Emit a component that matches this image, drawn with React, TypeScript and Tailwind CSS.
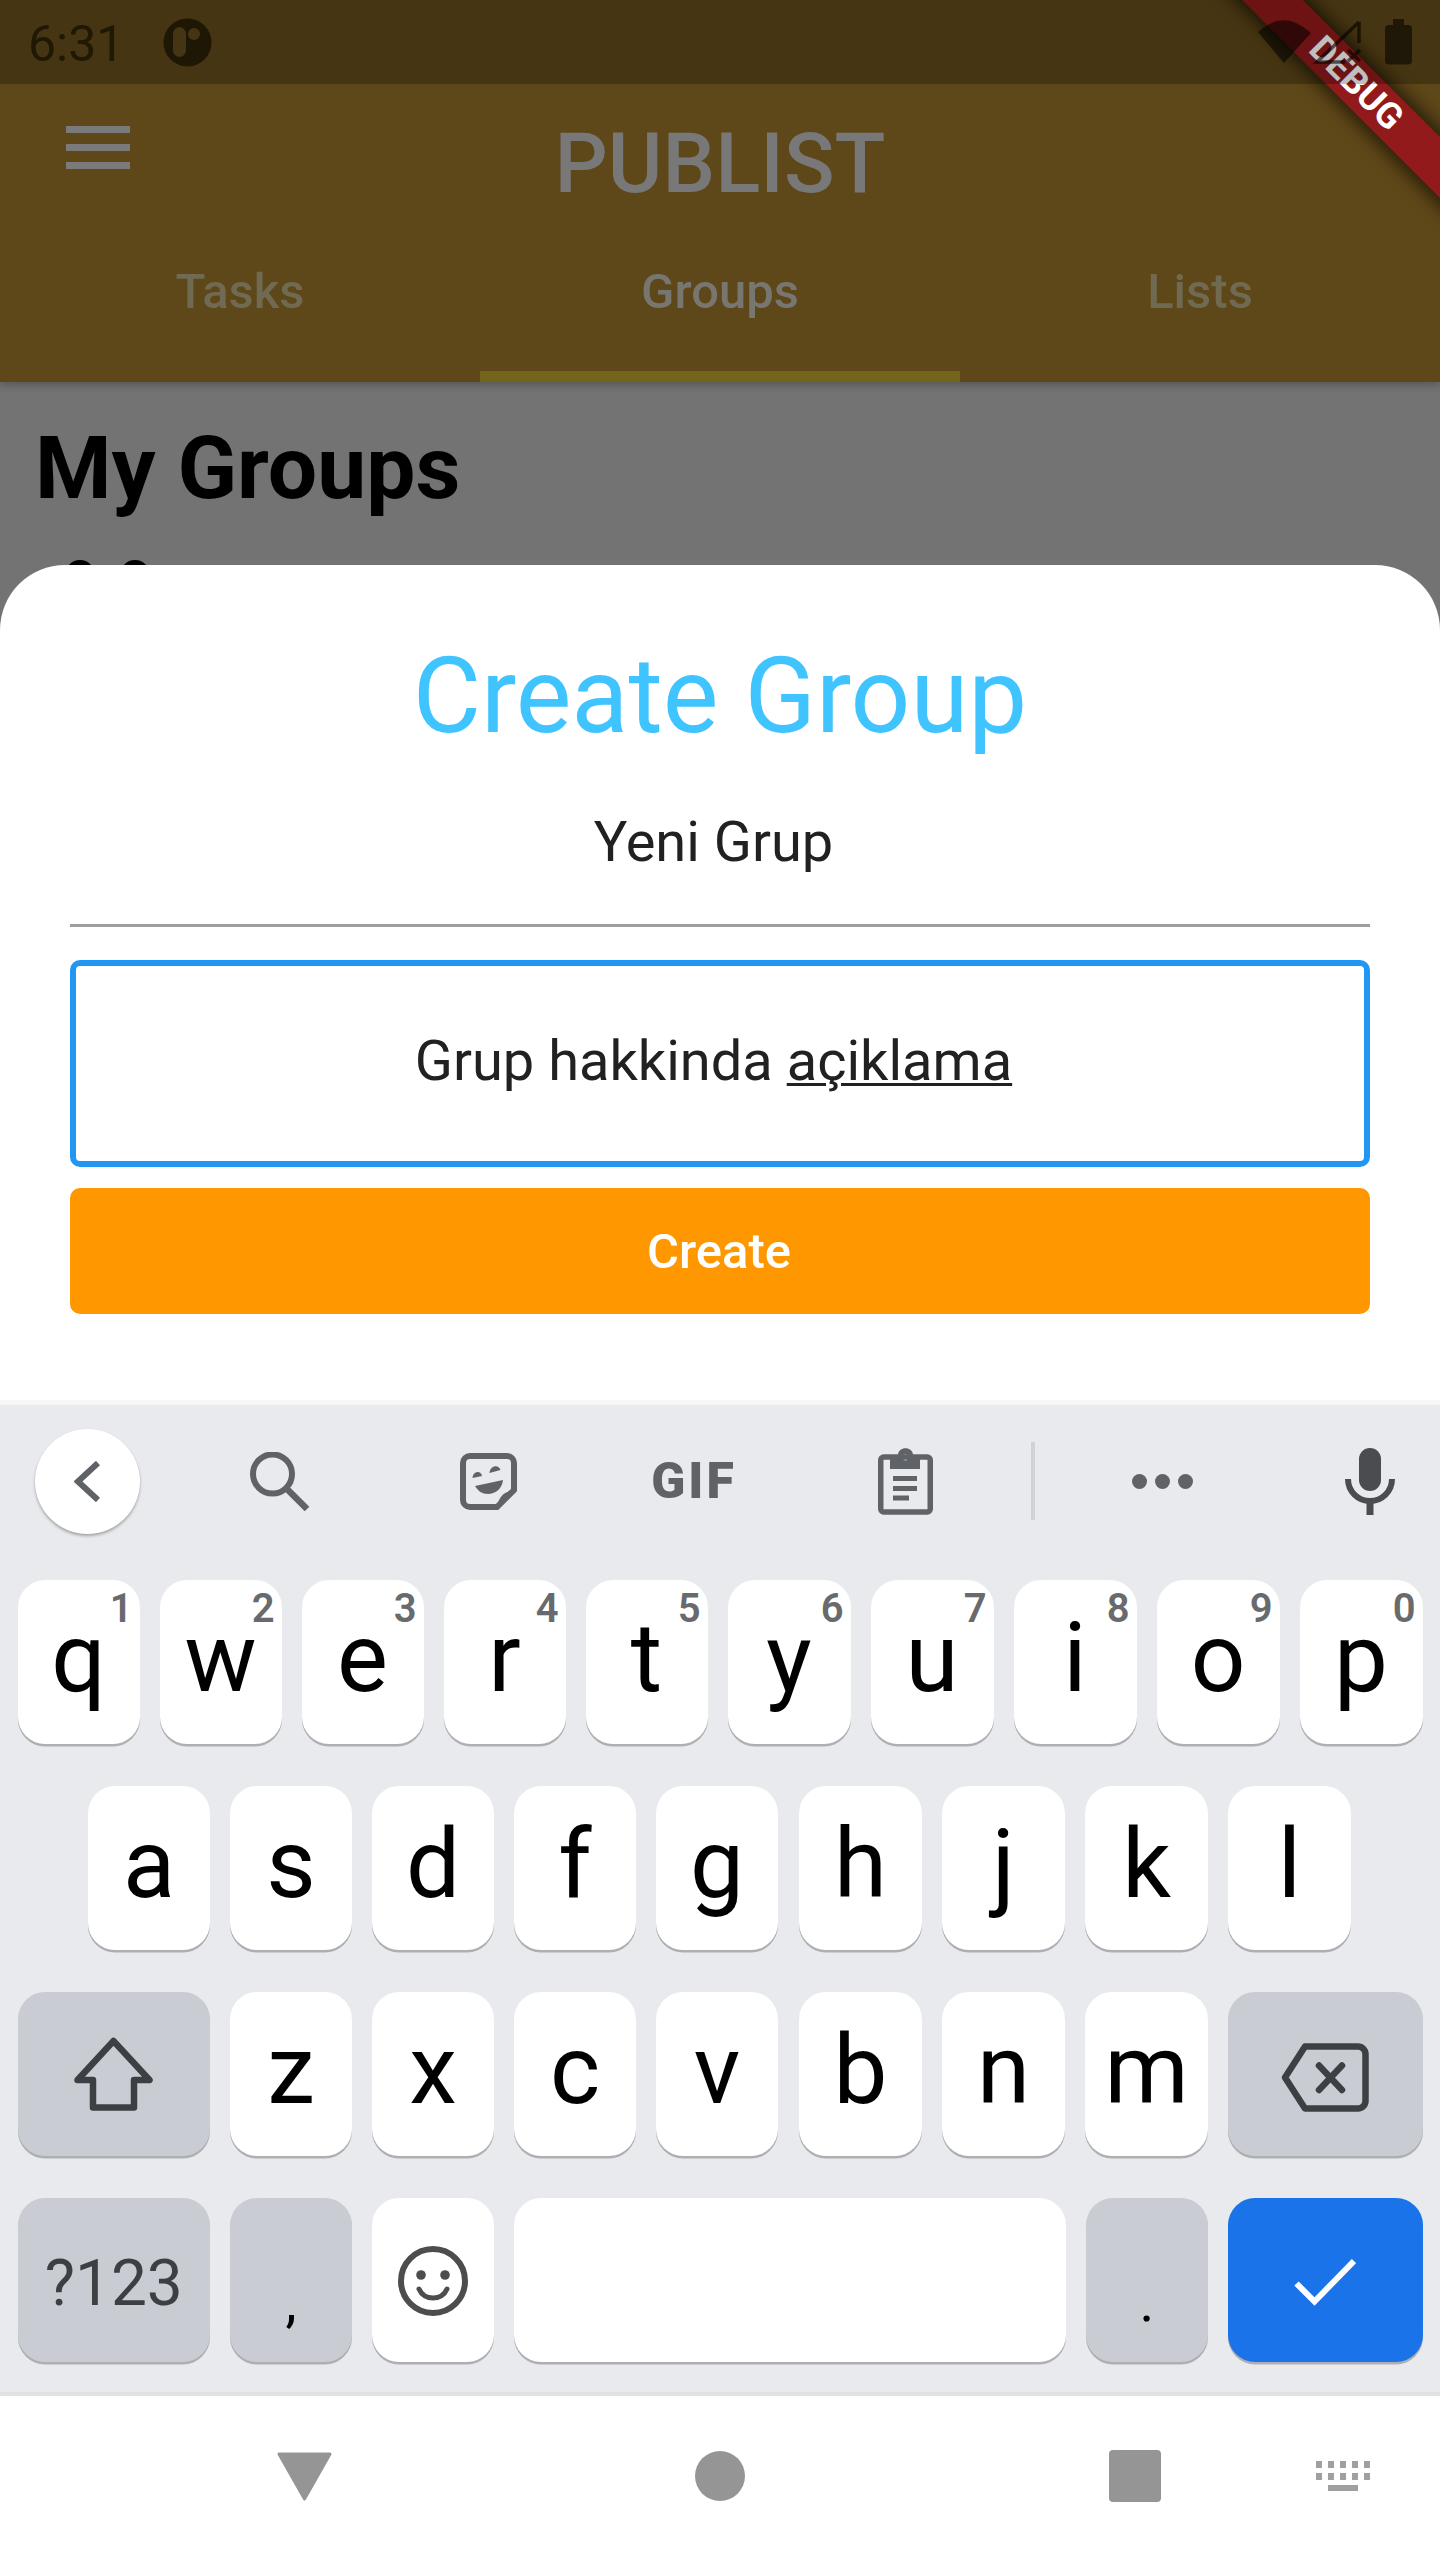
import React from 'react';

const row1 = [['q', '1'], ['w', '2'], ['e', '3'], ['r', '4'], ['t', '5'], ['y', '6'], ['u', '7'], ['i', '8'], ['o', '9'], ['p', '0']];
const row2 = ['a', 's', 'd', 'f', 'g', 'h', 'j', 'k', 'l'];
const row3 = ['z', 'x', 'c', 'v', 'b', 'n', 'm'];

const keyBase = 'relative h-[164px] rounded-[27px] shadow-[0_2.5px_0_#aeafb2] flex justify-center';

const LetterKey = ({ label, hint, wide, nudge }: { label: string; hint?: string; wide?: boolean; nudge?: boolean }) => (
  <div className={`${keyBase} items-start bg-white ${wide ? 'w-[123px]' : 'w-[122px]'} ${nudge ? 'ml-[1px]' : ''}`}>
    <span className="text-[96px] leading-[156px] text-black">{label}</span>
    {hint && <span className="absolute right-[7px] top-[7px] text-[40px] leading-[44px] font-semibold text-[#696a6d]">{hint}</span>}
  </div>
);

const SearchIcon = () => (
  <svg width="60" height="59" viewBox="0 0 60 59" fill="none" stroke="#5f6368">
    <circle cx="22.5" cy="22" r="19.5" strokeWidth="6" />
    <path d="M36 36 L57 57" strokeWidth="6.5" />
  </svg>
);

const StickerIcon = () => (
  <svg width="57" height="57" viewBox="0 0 57 57" fill="none">
    <path d="M10 3 H47 a7 7 0 0 1 7 7 V37 L37 54 H10 a7 7 0 0 1 -7 -7 V10 a7 7 0 0 1 7 -7 Z" stroke="#5f6368" strokeWidth="6" />
    <path d="M38 55 C37 45 44 38 56 37 Z" fill="#5f6368" />
    <path d="M12.5 25 C13 18 21 17 22 23 Z" fill="#5f6368" />
    <path d="M29.5 20 C30 12 39 11 40.5 17 Z" fill="#5f6368" />
    <path d="M15 33 L43 27 C42 36 35 41 28 41 C22 41 18 38 15 33 Z" fill="#5f6368" />
  </svg>
);

const ClipboardIcon = () => (
  <svg width="55" height="67" viewBox="0 0 55 67" fill="none">
    <rect x="2.75" y="9" width="49.5" height="55" rx="3" stroke="#5f6368" strokeWidth="5.5" />
    <path d="M12 7 H20 C20 -2 35 -2 35 7 H42 V21 H12 Z M27.5 6 a3.2 3.2 0 1 0 0.01 0 Z" fill="#5f6368" fillRule="evenodd" />
    <path d="M15 28 H39 V33 H15 Z M15 38 H39 V43 H15 Z M15 47.5 H31 V52.5 H15 Z" fill="#5f6368" />
  </svg>
);

const MicIcon = () => (
  <svg width="50" height="67" viewBox="0 0 50 67" fill="none">
    <rect x="14" y="0" width="22" height="43" rx="11" fill="#4a4c4f" />
    <path d="M3 31 a22 22 0 0 0 44 0" stroke="#4a4c4f" strokeWidth="6" />
    <rect x="21.5" y="52" width="7" height="15" fill="#4a4c4f" />
  </svg>
);

const ShiftIcon = () => (
  <svg width="79" height="75" viewBox="0 0 79 75" fill="none">
    <path d="M39.5 5 L75.5 44 H60 V71.5 H19 V44 H3.5 Z" stroke="#3c4043" strokeWidth="6.5" strokeLinejoin="round" />
  </svg>
);

const BackspaceIcon = () => (
  <svg width="88" height="69" viewBox="0 0 88 69" fill="none" stroke="#3c4043" strokeWidth="6.5">
    <path d="M24 3.5 H77 a7.5 7.5 0 0 1 7.5 7.5 V58 a7.5 7.5 0 0 1 -7.5 7.5 H24 L4 34.5 Z" strokeLinejoin="round" />
    <path d="M38 22.5 L61 47 M61 22.5 L38 47" strokeLinecap="round" />
  </svg>
);

const SmileIcon = () => (
  <svg width="70" height="70" viewBox="0 0 70 70" fill="none" stroke="#4d4d4d">
    <circle cx="35" cy="35" r="32" strokeWidth="6" />
    <circle cx="23" cy="29" r="4.8" fill="#4d4d4d" stroke="none" />
    <circle cx="47" cy="29" r="4.8" fill="#4d4d4d" stroke="none" />
    <path d="M21 43 C26 55 44 55 49 43" strokeWidth="5" strokeLinecap="round" />
  </svg>
);

const StatusBar = () => (
  <div className="absolute left-0 top-0 z-20 h-[84px] w-full bg-black/25">
    <span className="absolute left-[28px] top-[16px] text-[50px] leading-[56px] text-[#1e1805]">6:31</span>
    <svg className="absolute left-[163px] top-[18px]" width="49" height="49" viewBox="0 0 49 49">
      <circle cx="24.5" cy="24.5" r="24" fill="#1f1705" />
      <rect x="10" y="9" width="13" height="30" rx="6.5" fill="#463512" />
      <circle cx="31" cy="16" r="6" fill="#463512" />
    </svg>
    <svg className="absolute right-0 top-0" width="190" height="70" viewBox="1250 0 190 70">
      <path d="M1258 32 Q1284 8 1311 33 L1284 63 Z" fill="#000" fillOpacity="0.55" />
      <path d="M1359 22 V43 M1359 22 L1317 62 H1345" fill="none" stroke="#000" strokeOpacity="0.6" strokeWidth="3.5" />
      <path d="M1348 50 L1360 61 M1360 50 L1348 61" stroke="#000" strokeOpacity="0.6" strokeWidth="3.5" />
      <path d="M1393 25 V19 H1404 V25 H1408 a4 4 0 0 1 4 4 V60.5 a4 4 0 0 1 -4 4 H1389 a4 4 0 0 1 -4 -4 V29 a4 4 0 0 1 4 -4 Z" fill="#000" fillOpacity="0.55" />
    </svg>
  </div>
);

export default function App() {
  return (
    <div className="relative flex h-[2560px] w-[1440px] flex-col overflow-hidden bg-[#737373] font-['Roboto',sans-serif]">
      <StatusBar />

      {/* debug ribbon */}
      <div className="absolute left-[1106px] top-[62px] z-10 flex h-[43px] w-[500px] rotate-45 items-center justify-center bg-[#921a1a] shadow-[0_0_16px_6px_rgba(0,0,0,0.55)]">
        <span className="text-[36px] font-bold leading-[43px] text-white">DEBUG</span>
      </div>

      <header className="relative z-[1] h-[382px] shrink-0 bg-[#5e4718] pt-[84px] shadow-[0_3px_8px_rgba(0,0,0,0.25)]">
        <div className="grid h-[181px] grid-cols-[1fr_auto_1fr]">
          <div className="pl-[66px] pt-[42px]">
            <div className="flex w-[64px] flex-col gap-[11px]">
              <div className="h-[7px] bg-[#7a7a7a]" />
              <div className="h-[7px] bg-[#7a7a7a]" />
              <div className="h-[7px] bg-[#7a7a7a]" />
            </div>
          </div>
          <h1 className="pt-[32px] text-[83.5px] font-medium leading-[96px] text-[#787878]">PUBLIST</h1>
          <div />
        </div>
        <div className="grid grid-cols-3 text-center text-[49px] font-medium leading-[54px]">
          <div className="h-[117px] text-[#706a52]">Tasks</div>
          <div className="h-[117px] border-b-[11px] border-[#736519] text-[#787670]">Groups</div>
          <div className="h-[117px] text-[#706a52]">Lists</div>
        </div>
      </header>

      <main className="h-[183px] shrink-0 overflow-hidden pl-[35px] pt-[37px]">
        <h2 className="text-[87.5px] font-bold leading-[98px] text-black">My Groups</h2>
        <div className="ml-[30px] mt-[43px] flex gap-[25px]">
          <div className="h-[30px] w-[30px] rounded-full bg-black" />
          <div className="h-[30px] w-[30px] rounded-full bg-black" />
        </div>
      </main>

      <section className="h-[840px] shrink-0 rounded-t-[65px] bg-white px-[70px] pt-[73px]">
        <h3 className="text-center text-[105px] leading-[118px] text-[#40c4ff]">Create Group</h3>
        <div className="mt-[54px] h-[117px] border-b-[3px] border-[#9e9e9e] pr-[13px] text-center text-[56px] leading-[64px] text-[#212121]">Yeni Grup</div>
        <div className="mt-[33px] flex h-[207px] items-center justify-center rounded-[10px] border-[6px] border-[#2196f3] pb-[5px] pr-[13px] text-[56px] leading-[64px] text-[#212121]">
          <span>Grup hakkinda <span className="underline decoration-[3px] underline-offset-[3px]">açiklama</span></span>
        </div>
        <button className="mt-[21px] flex h-[126px] w-full items-center justify-center rounded-[10px] bg-[#ff9800] pr-[2px] pt-[2px] text-[49px] font-medium leading-[54px] text-white">Create</button>
      </section>

      <section className="z-[1] h-[987px] shrink-0 bg-[#e8eaed] shadow-[0_-5px_0_#f6f6f6]">
        <div className="flex h-[175px] items-center pb-[23px]">
          <div className="flex w-[174px] justify-center">
            <div className="flex h-[105px] w-[105px] items-center justify-center rounded-full bg-white shadow-[0_2px_3px_rgba(0,0,0,0.3)]">
              <svg width="26" height="41" viewBox="0 0 26 41" fill="none"><path d="M24 2 L4 20.5 L24 39" stroke="#5f6368" strokeWidth="6" /></svg>
            </div>
          </div>
          <div className="flex w-[212px] justify-center"><SearchIcon /></div>
          <div className="flex w-[204px] justify-center"><StickerIcon /></div>
          <div className="flex w-[208px] justify-center text-[50px] font-black leading-[40px] tracking-[3px] text-[#5f6368]">GIF</div>
          <div className="flex w-[214px] justify-center"><ClipboardIcon /></div>
          <div className="flex w-[42px] justify-center"><div className="h-[78px] w-[4px] bg-[#d0d2d6]" /></div>
          <div className="flex w-[216px] justify-center gap-[8px]">
            <div className="h-[15px] w-[15px] rounded-full bg-[#5f6368]" />
            <div className="h-[15px] w-[15px] rounded-full bg-[#5f6368]" />
            <div className="h-[15px] w-[15px] rounded-full bg-[#5f6368]" />
          </div>
          <div className="flex flex-1 justify-end pr-[45px]"><MicIcon /></div>
        </div>

        <div className="flex flex-col gap-[42px]">
          <div className="flex gap-[20px] pl-[17.5px]">
            {row1.map(([l, n], i) => <LetterKey key={l} label={l} hint={n} wide={i >= 5} />)}
          </div>
          <div className="flex gap-[20px] pl-[88px]">
            {row2.map((l, i) => <LetterKey key={l} label={l} wide={i >= 5} nudge={i === 5} />)}
          </div>
          <div className="flex gap-[20px] pl-[17.5px]">
            <div className={`${keyBase} w-[192.5px] items-center bg-[#caccd3] pb-[2px]`}><ShiftIcon /></div>
            {row3.map((l, i) => <LetterKey key={l} label={l} wide={i >= 4} nudge={i === 4} />)}
            <div className={`${keyBase} w-[194.5px] items-center bg-[#caccd3] pt-[6px]`}><BackspaceIcon /></div>
          </div>
          <div className="flex gap-[20px] px-[17.5px]">
            <div className={`${keyBase} w-[192.5px] items-start bg-[#caccd3] text-[64px] leading-[171px] text-[#3c4043]`}>?123</div>
            <div className={`${keyBase} w-[122px] items-start bg-[#caccd3] text-[56px] leading-[208px] text-black`}>,</div>
            <div className={`${keyBase} w-[122px] items-center bg-white pt-[2px]`}><SmileIcon /></div>
            <div className={`${keyBase} flex-1 bg-white`} />
            <div className={`${keyBase} w-[122px] items-start bg-[#caccd3] text-[56px] leading-[208px] text-black`}>.</div>
            <div className={`${keyBase} w-[194.5px] items-center bg-[#1a73e8] pt-[4px]`}>
              <svg width="62" height="48" viewBox="0 0 62 48" fill="none"><path d="M2.5 25.5 L20.5 43.5 L60 3" stroke="#fff" strokeWidth="6" /></svg>
            </div>
          </div>
        </div>
      </section>

      <nav className="relative flex flex-1 items-center border-t-[4px] border-[#e0e1e3] bg-white pb-[4px]">
        <div className="flex w-[608px] justify-center">
          <svg width="57" height="49" viewBox="0 0 57 49"><path d="M3 2 H54 L28.5 47 Z" fill="#959595" stroke="#959595" strokeWidth="3" strokeLinejoin="round" /></svg>
        </div>
        <div className="flex w-[224px] justify-center"><div className="h-[50px] w-[50px] rounded-full bg-[#959595]" /></div>
        <div className="ml-[277px] h-[52px] w-[52px] rounded-[4px] bg-[#959595]" />
        <div className="ml-[155px] grid w-[54px] grid-cols-5 gap-x-[5.5px] gap-y-[5px]">
          {Array.from({ length: 10 }).map((_, i) => <div key={i} className="h-[7px] w-[6px] bg-[#a0a0a0]" />)}
          <div className="col-span-5 mx-[12px] h-[6px] bg-[#a0a0a0]" />
        </div>
      </nav>
    </div>
  );
}
